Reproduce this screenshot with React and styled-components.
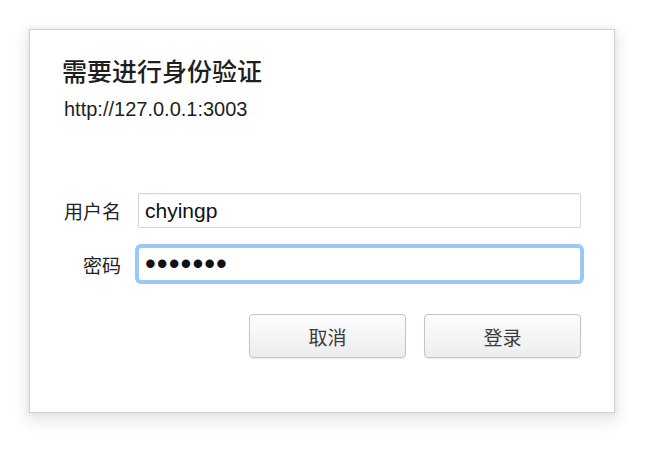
import React from 'react';
import styled, { createGlobalStyle } from 'styled-components';

const GlobalStyle = createGlobalStyle`
  html, body {
    margin: 0;
    padding: 0;
    background: #ffffff;
  }
  body {
    font-family: "Liberation Sans", "Noto Sans CJK SC", sans-serif;
    color: #222;
  }
`;

const Page = styled.div`
  width: 655px;
  height: 451px;
  padding: 29px 0 0 29px;
  box-sizing: border-box;
`;

const Dialog = styled.div`
  width: 586px;
  height: 384px;
  box-sizing: border-box;
  background: #fff;
  border: 1px solid #d2d2d2;
  box-shadow: 0 6px 14px 3px rgba(0, 0, 0, 0.09), 0 0 4px 2px rgba(0, 0, 0, 0.04);
  padding: 26px 32px 0 32px;
  display: flex;
  flex-direction: column;
`;

const Title = styled.h2`
  margin: 0;
  font-size: 25px;
  font-weight: 500;
  line-height: 32px;
  color: #1e1e1e;
`;

const Origin = styled.div`
  margin-top: 8px;
  font-size: 20px;
  line-height: 26px;
  color: #1e1e1e;
  padding-left: 2px;
`;

const Form = styled.div`
  margin-top: 71px;
  display: grid;
  grid-template-columns: 59px minmax(0, 1fr);
  column-gap: 17px;
  row-gap: 19px;
  align-items: center;
  width: 519px;
`;

const Label = styled.label`
  text-align: right;
  font-size: 19px;
  color: #222;
`;

const Input = styled.input`
  width: 100%;
  min-width: 0;
  height: ${p => (p.$focused ? '34px' : '35px')};
  box-sizing: border-box;
  border: 1px solid ${p => (p.$focused ? '#9cc6f4' : '#d8d8d8')};
  border-radius: ${p => (p.$focused ? '3px' : '1px')};
  padding: 0 6px;
  font-family: "Liberation Sans", "Noto Sans CJK SC", sans-serif;
  font-size: ${p => (p.type === 'password' ? '31px' : '21px')};
  letter-spacing: ${p => (p.type === 'password' ? '1px' : '0')};
  color: #111;
  background: #fff;
  outline: none;
  box-shadow: ${p => (p.$focused ? '0 0 0 3px #9cc6f4' : 'inset 0 1px 1px rgba(0,0,0,0.05)')};
`;

const Actions = styled.div`
  margin-top: 33px;
  width: 519px;
  display: flex;
  justify-content: flex-end;
  gap: 18px;
`;

const Button = styled.button`
  width: 157px;
  height: 44px;
  border: 1px solid #c4c4c4;
  border-radius: 4px;
  background: linear-gradient(#fdfdfd, #ededed);
  box-shadow: 0 1px 1px rgba(0, 0, 0, 0.08);
  font-family: "Liberation Sans", "Noto Sans CJK SC", sans-serif;
  font-size: 19px;
  color: #3a3a3a;
  cursor: pointer;
`;

export default function App() {
  return (
    <>
      <GlobalStyle />
      <Page>
        <Dialog>
          <Title>需要进行身份验证</Title>
          <Origin>http://127.0.0.1:3003</Origin>
          <Form>
            <Label>用户名</Label>
            <Input type="text" defaultValue="chyingp" />
            <Label>密码</Label>
            <Input type="password" defaultValue="secret1" $focused />
          </Form>
          <Actions>
            <Button>取消</Button>
            <Button>登录</Button>
          </Actions>
        </Dialog>
      </Page>
    </>
  );
}
